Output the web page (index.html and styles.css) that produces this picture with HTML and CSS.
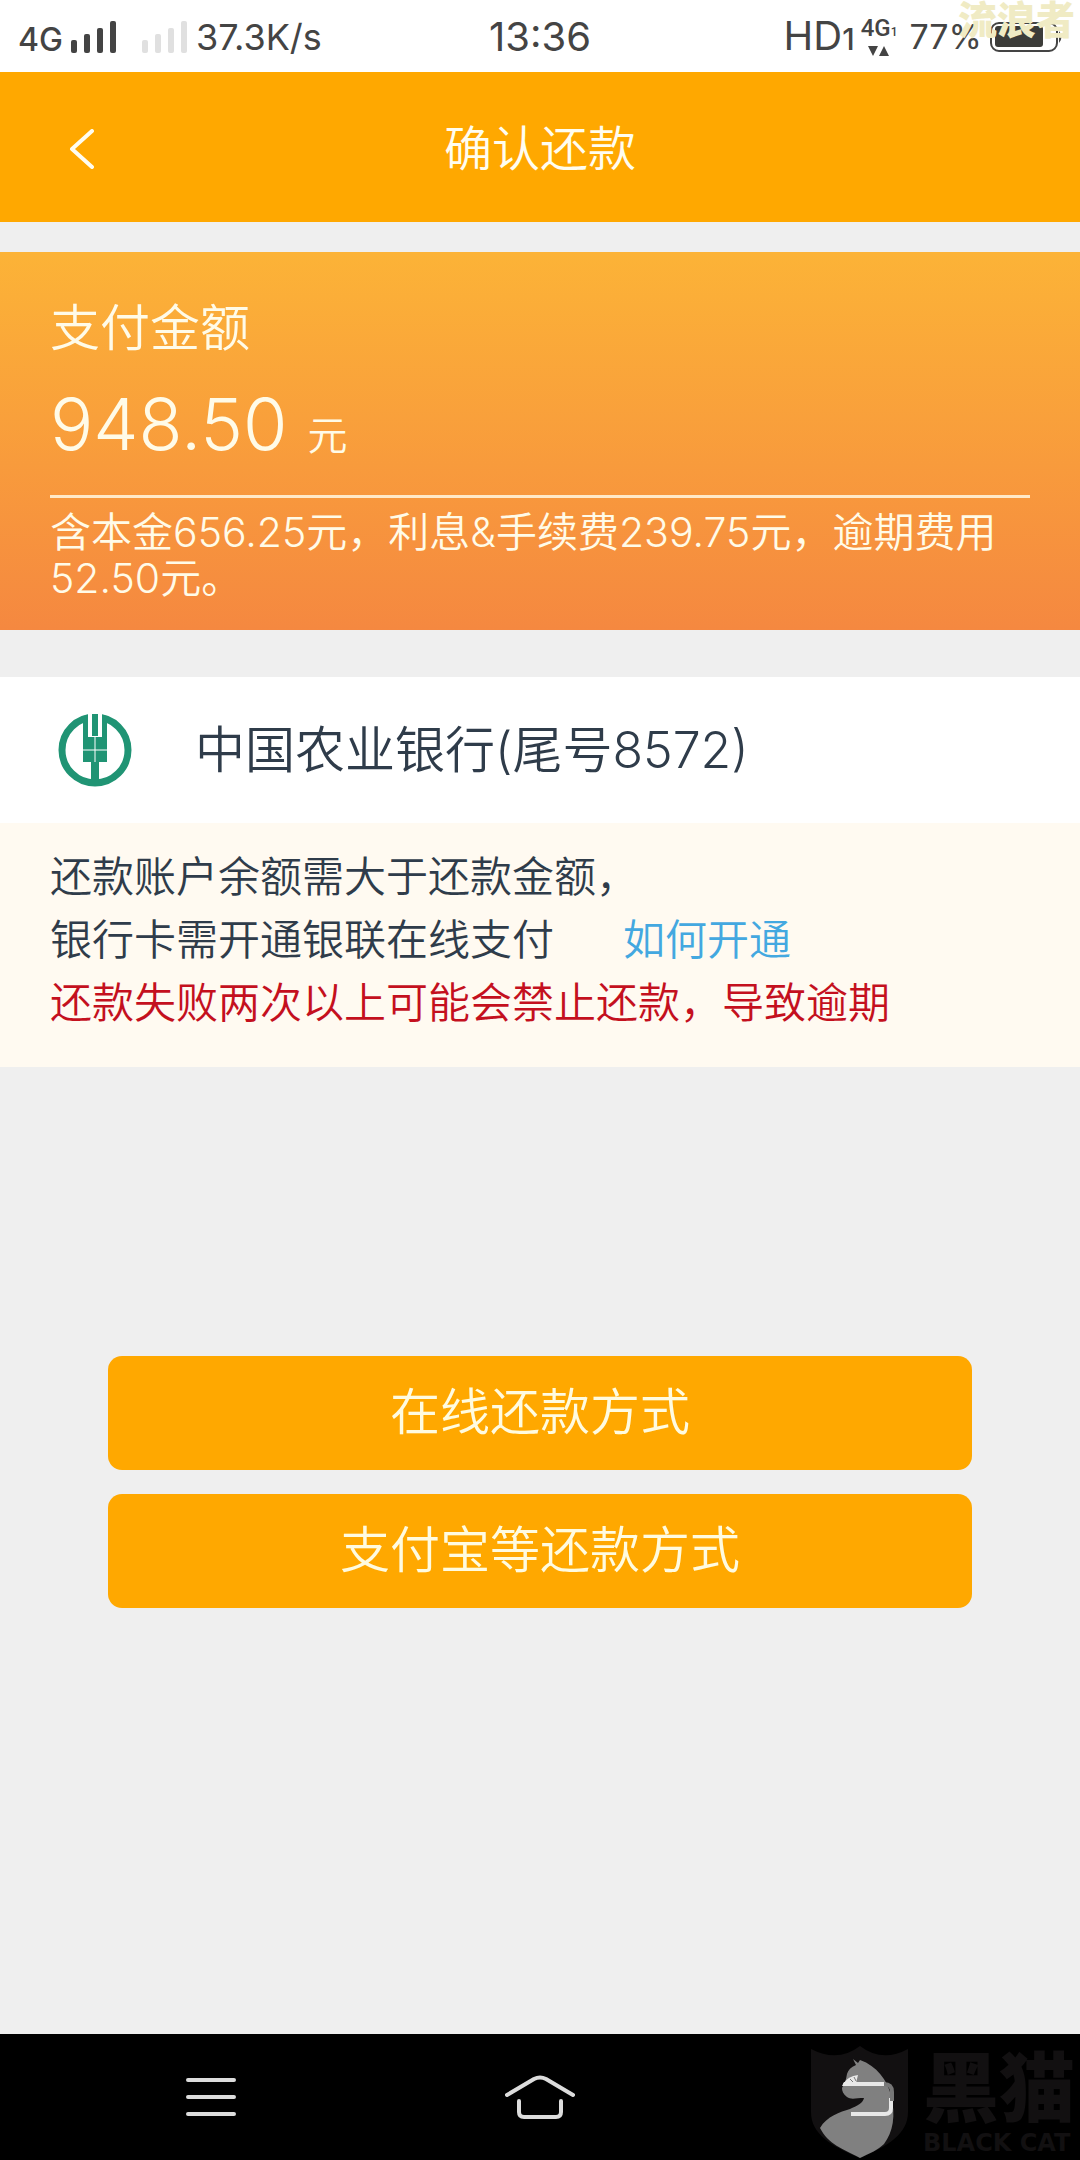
FILE: index.html
```html
<!DOCTYPE html>
<html lang="zh-CN">
<head>
<meta charset="utf-8">
<meta name="viewport" content="width=device-width, initial-scale=1">
<title>确认还款</title>
<link rel="stylesheet" href="styles.css">
</head>
<body>
<div class="status-bar">
  <div class="status-side">
    <span class="network">4G</span>
    <svg class="signal" width="46" height="32" viewBox="0 0 46 32" aria-hidden="true"><rect x="0" y="19" width="6" height="13" rx="2"/><rect x="13" y="13" width="6" height="19" rx="2"/><rect x="26" y="7" width="6" height="25" rx="2"/><rect x="39" y="0" width="6" height="32" rx="2"/></svg>
    <svg class="signal signal-empty" width="46" height="32" viewBox="0 0 46 32" aria-hidden="true"><rect x="0" y="19" width="6" height="13" rx="2"/><rect x="13" y="13" width="6" height="19" rx="2"/><rect x="26" y="7" width="6" height="25" rx="2"/><rect x="39" y="0" width="6" height="32" rx="2"/></svg>
    <span class="speed">37.3K/s</span>
  </div>
  <time class="clock">13:36</time>
  <div class="status-side status-right">
    <span class="hd">HD<span class="hd-sim">1</span></span>
    <span class="data">
      <span class="data-label">4G<span class="data-sim">1</span></span>
      <svg width="22" height="10" viewBox="0 0 22 10" aria-hidden="true"><path d="M0 0h10L5 10zM11 10h10L16 0z" fill="#444"/></svg>
    </span>
    <span class="percent">77%</span>
    <svg class="battery" width="72" height="32" viewBox="0 0 72 32" aria-hidden="true"><rect x="1" y="2" width="66" height="28" rx="8" fill="none" stroke="#444" stroke-width="2"/><rect x="5" y="5" width="48" height="21" rx="3" fill="#3c3c39"/><path d="M69 10q5 6 0 12z" fill="#444"/></svg>
  </div>
  <span class="user-mark">流浪者</span>
</div>

<header class="header">
  <button class="back" type="button" aria-label="返回"><svg width="26" height="40" viewBox="0 0 26 40" fill="none" stroke="#fffdf0" stroke-width="4" stroke-linecap="round" stroke-linejoin="round"><path d="M23 2 3 20l20 18"/></svg></button>
  <h1 class="title">确认还款</h1>
</header>

<main class="content">
  <section class="amount-card">
    <h2 class="amount-label">支付金额</h2>
    <p class="amount"><span class="amount-value">948.50</span><span class="amount-unit">元</span></p>
    <p class="amount-detail">含本金656.25元，利息&amp;手续费239.75元，逾期费用52.50元。</p>
  </section>

  <section class="bank">
    <svg class="bank-logo" width="76" height="76" viewBox="0 0 76 76" aria-hidden="true">
      <circle cx="38" cy="38" r="33" fill="none" stroke="#209474" stroke-width="7"/>
      <path d="M31 0h14v10H31z" fill="#fff"/>
      <path d="M26 4l5-1v22h14V3l5 1v46H42v22h-8V50H26z" fill="#209474"/>
      <path d="M35 2h6v22h-6z" fill="#209474"/>
      <path d="M38 25v25M26 38h24" stroke="#fff" stroke-width="1"/>
    </svg>
    <span class="bank-name">中国农业银行(尾号8572)</span>
  </section>

  <section class="notice">
    <p>还款账户余额需大于还款金额，</p>
    <p>银行卡需开通银联在线支付<a class="help" href="#help">如何开通</a></p>
    <p class="warning">还款失败两次以上可能会禁止还款，导致逾期</p>
  </section>

  <div class="actions">
    <button class="pay" type="button">在线还款方式</button>
    <button class="pay" type="button">支付宝等还款方式</button>
  </div>
</main>

<nav class="nav">
  <button class="nav-key" type="button" aria-label="最近任务"><svg width="50" height="44" viewBox="0 0 50 44" fill="none" stroke="#dcdcdc" stroke-width="4" stroke-linecap="round"><path d="M2 5h46M2 22h46M2 39h46"/></svg></button>
  <button class="nav-key" type="button" aria-label="主页"><svg width="70" height="44" viewBox="0 0 70 44" fill="none" stroke="#dcdcdc" stroke-width="4" stroke-linecap="round" stroke-linejoin="round"><path d="M2 20 29 4q6-3 12 0l27 16M14 26v11q0 5 5 5h32q5 0 5-5V26"/></svg></button>
  <button class="nav-key" type="button" aria-label="返回"><svg width="50" height="44" viewBox="-6 0 50 44" fill="none" stroke="#e8e8e8" stroke-width="4"><path d="M0 7h36q6 0 6 6v20q0 5-6 5H0"/></svg></button>
  <div class="brand" aria-hidden="true">
    <svg width="98" height="112" viewBox="0 0 98 112">
      <path d="M0 3q27 14 49-3 22 17 48 3v63c0 22-20 34-48 46C20 100 0 88 0 66z" fill="#121011"/>
      <path d="M42 13l5 4 2-3c17 6 27 20 31 35 5 21 2 37-7 49-6 6-14 9-24 14C32 103 17 98 9 82c7-12 20-16 30-19 7-3 13-6 14-11-8 0-13 2-17-1-4-3-5-6-5-9 3-5 4-8 5-14 1-4 4-7 9-9z" fill="#808080"/>
      <path d="M32 38q5-8 15-9l-2 8-12 2z" fill="#e8e8e8"/>
      <path d="M39 33l3 3M43 31l2 4" stroke="#777" stroke-width="1"/>
      <path d="M33 36h41l2 4H31z" fill="#e8e8e8"/>
      <path d="M80 52v10q0 6-6 6H40" fill="none" stroke="#e8e8e8" stroke-width="4"/>
      <path d="M73 38q8 0 8 8v9" fill="none" stroke="#777" stroke-width="4"/>
    </svg>
    <div class="brand-text"><span class="brand-name">黑猫</span><span class="brand-latin">BLACK CAT</span></div>
  </div>
</nav>
</body>
</html>
```
FILE: styles.css
```css
* {
  box-sizing: border-box;
}

body {
  display: flex;
  flex-direction: column;
  min-height: 100vh;
  margin: 0;
  background: #efefef;
  color: #2f3c4a;
  font-family: Inter, "Noto Sans CJK SC", sans-serif;
  font-weight: 350;
}

h1, h2, p {
  margin: 0;
  font-weight: inherit;
}

button {
  padding: 0;
  border: 0;
  background: none;
  font: inherit;
  cursor: pointer;
}

svg {
  display: block;
  flex: none;
}

.status-bar {
  position: relative;
  display: grid;
  grid-template-columns: 1fr auto 1fr;
  align-items: center;
  height: 72px;
  padding: 2px 18px 0;
  background: #fff;
  color: #444;
  font-weight: 400;
  line-height: 40px;
}

.status-side {
  display: flex;
  align-items: center;
}

.network {
  margin: 6px 8px 0 0;
  font-size: 32px;
  font-weight: 500;
}

.signal {
  fill: #444;
}

.signal-empty {
  margin: 0 8px 0 25px;
  fill: #e0e0e0;
}

.speed {
  font-size: 36px;
}

.percent {
  font-size: 34px;
}

.clock {
  font-size: 40px;
}

.status-right {
  justify-content: flex-end;
}

.hd {
  font-size: 40px;
}

.hd-sim {
  font-size: 30px;
  font-weight: 500;
}

.data {
  display: flex;
  flex-direction: column;
  align-items: center;
  gap: 4px;
  margin: 0 12px 0 6px;
}

.data-label {
  font-family: Roboto, sans-serif;
  font-size: 24px;
  font-weight: 500;
  line-height: 20px;
}

.data-sim {
  font-size: 12px;
}

.battery {
  margin-left: 8px;
}

.user-mark {
  position: absolute;
  top: 0;
  right: 5px;
  color: #f0ebc4;
  font-size: 39px;
  font-weight: 900;
  line-height: 40px;
}

.header {
  display: grid;
  grid-template-columns: 1fr auto 1fr;
  align-items: center;
  height: 150px;
  padding: 4px 69px 0;
  background: #ffa800;
  color: #fffdf0;
}

.back {
  justify-self: start;
}

.title {
  font-size: 48px;
  line-height: 60px;
}

.amount-card {
  margin-top: 30px;
  padding: 46px 50px 29px;
  background: linear-gradient(#fcb337, #f58840);
  color: #fffbe8;
}

.amount-label {
  font-size: 50px;
  line-height: 60px;
}

.amount {
  display: flex;
  align-items: baseline;
  gap: 20px;
  margin-top: 21px;
  padding-bottom: 26px;
  border-bottom: 3px solid #ffe9c8;
  line-height: 90px;
}

.amount-value {
  font-size: 72px;
}

.amount-unit {
  font-size: 40px;
  line-height: 40px;
}

.amount-detail {
  padding-top: 11px;
  font-size: 41px;
  line-height: 46px;
}

.bank {
  display: flex;
  align-items: center;
  gap: 62px;
  height: 146px;
  margin-top: 47px;
  padding: 0 57px;
  background: #fff;
}

.bank-name {
  font-size: 50px;
  line-height: 60px;
}

.notice {
  padding: 22px 50px 33px;
  background: #fffaf1;
  font-size: 42px;
  line-height: 63px;
}

.help {
  margin-left: 69px;
  color: #43a8e0;
  text-decoration: none;
}

.warning {
  color: #c4101e;
}

.actions {
  display: grid;
  gap: 24px;
  margin: 289px 10% 60px;
}

.pay {
  height: 114px;
  padding-bottom: 10px;
  border-radius: 14px;
  background: #ffa800;
  color: #fffbe0;
  font-size: 50px;
}

.nav {
  position: relative;
  display: flex;
  align-items: center;
  justify-content: space-between;
  height: 126px;
  margin-top: auto;
  padding: 0 186px;
  background: #000;
}

.brand {
  position: absolute;
  right: 0;
  bottom: 2px;
  display: flex;
  gap: 14px;
  color: #121011;
}

.brand-text {
  display: flex;
  flex-direction: column;
  width: 157px;
  font-weight: 900;
}

.brand-name {
  font-size: 76px;
  line-height: 84px;
}

.brand-latin {
  font-family: "DejaVu Sans", sans-serif;
  font-size: 24px;
  font-weight: 700;
  line-height: 26px;
  white-space: nowrap;
}
```
